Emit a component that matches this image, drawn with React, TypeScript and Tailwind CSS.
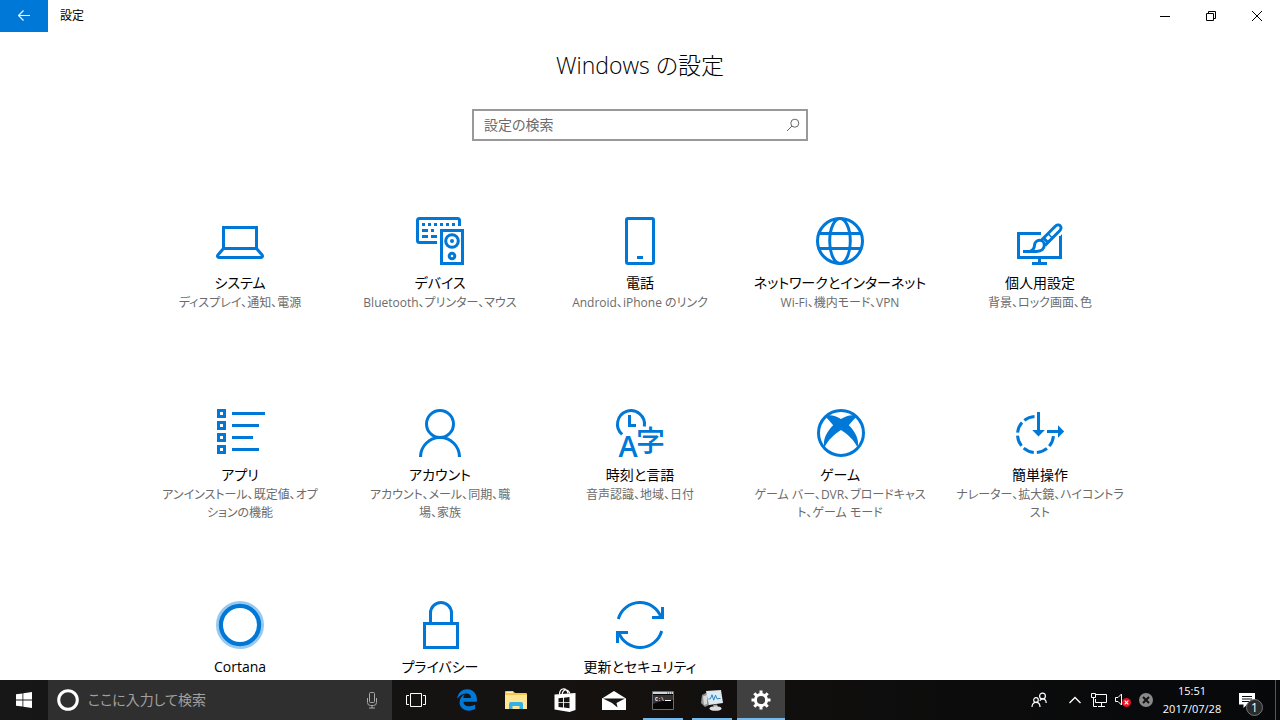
import React from "react";
import { FaEdgeLegacy } from "react-icons/fa";

type Category = {
  title: string;
  lines: string[];
  icon: React.ReactNode;
};

function TileIcon({ children }: { children: React.ReactNode }) {
  return (
    <svg
      viewBox="0 0 48 48"
      className="size-12 overflow-visible text-[#0078d7]"
      fill="none"
      stroke="currentColor"
      strokeWidth="3"
      aria-hidden="true"
    >
      {children}
    </svg>
  );
}

const systemIcon = (
  <TileIcon>
    <path d="M7.5 31.5V10.5h33v21" />
    <path d="M7.5 31.5h33l5.4 6.2c1.3 1.6.3 2.8-1.4 2.8h-41c-1.7 0-2.7-1.2-1.4-2.8z" />
  </TileIcon>
);

const devicesIcon = (
  <TileIcon>
    <path d="M21 25.5H3.5q-2 0-2-2v-20q0-2 2-2h38q2 0 2 2V9" />
    <path d="M6 7.5h3m3 0h3m3 0h3m3 0h3m3 0h3m3 0h3M6 13.5h6m3 0h3M6 19.5h6m3 0h6" />
    <path d="M25.5 13.5h21v33h-21z" />
    <circle cx="36" cy="24" r="6.3" />
    <circle cx="36" cy="24" r="2" fill="currentColor" stroke="none" />
    <circle cx="36" cy="39" r="2.8" />
  </TileIcon>
);

const phoneIcon = (
  <TileIcon>
    <rect x="10.5" y="1.5" width="27" height="45" rx="1.5" />
    <path d="M21 40.5h6" />
  </TileIcon>
);

const networkIcon = (
  <TileIcon>
    <circle cx="24" cy="24" r="22.5" />
    <ellipse cx="24" cy="24" rx="10.3" ry="22.5" />
    <path d="M3 16.5h42M3 31.5h42" />
  </TileIcon>
);

const personalIcon = (
  <TileIcon>
    <path d="M25 16.5H2.5v24h42V19" />
    <path d="M23.5 42v4M16 46.5h15" />
    <path d="M46 17v5l-3-1.5z" fill="currentColor" stroke="none" />
    <path d="M7 34.5h13.5c5 0 7.8-2.6 7.8-6.4 0-2.6-2-4.8-4.6-4.8-3 0-5 2.2-5.2 5-.2 3-1.6 5-4.5 6.2" />
    <path d="M24.6 24 39.3 9.3c1.5-1.5 3.6-1.9 4.9-.6s1 3.5-.5 5L29 28.4" />
    <path d="m27.5 21 4.3 4.3" />
    <path d="m32 16.6 4 4" strokeWidth="1.5" />
  </TileIcon>
);

const appsIcon = (
  <TileIcon>
    <path d="M2.5 1.5h6v6h-6zM2.5 13.5h6v6h-6zM2.5 25.5h6v6h-6zM2.5 37.5h6v6h-6z" />
    <path d="M16 4.5h33M16 16.5h27M16 28.5h21M16 40.5h27" />
  </TileIcon>
);

const accountsIcon = (
  <TileIcon>
    <circle cx="24" cy="15" r="13.5" />
    <path d="M4.5 48a19.5 19.5 0 0 1 39 0" />
  </TileIcon>
);

const timeIcon = (
  <TileIcon>
    <path d="M6.2 25.4A13.5 13.5 0 1 1 28.3 17.5" />
    <path d="M13.5 6v10.5H20" />
    <text x="2.5" y="48" fontSize="29" fontWeight="600" fontFamily="Open Sans, sans-serif" fill="currentColor" stroke="none">
      A
    </text>
    <text x="20" y="43" fontSize="29" fontWeight="500" fontFamily="Noto Sans CJK JP, sans-serif" fill="currentColor" stroke="none">
      字
    </text>
  </TileIcon>
);

const gamingIcon = (
  <TileIcon>
    <circle cx="25" cy="24" r="22.5" />
    <path
      d="M9 7.5C13 5 19 6.2 25 10 31 6.2 37 5 41 7.5 39 9 36 12.5 32.8 16.2 39 22 43.8 31 41.5 38.5 38 31 32 25.5 25 21 18 25.500 12 31 8.500 38.500 6.200 31 11 22 17.200 16.200 14 12.500 11 9 9 7.500z"
      fill="currentColor"
      stroke="none"
    />
  </TileIcon>
);

const easeIcon = (
  <TileIcon>
    <path d="M37.5 25.5a18 18 0 1 1-18-18" strokeDasharray="11 3.14" strokeDashoffset="-1.57" />
    <path d="M22.5 3v19M31 22.5h12" />
    <path d="M16.2 21h12.6l-6.3 6.5zM42 16.2v12.6l6.2-6.3z" fill="currentColor" stroke="none" />
  </TileIcon>
);

const cortanaIcon = (
  <TileIcon>
    <circle cx="24" cy="24" r="22.2" stroke="#99c9ef" strokeWidth="3.6" />
    <circle cx="24" cy="24" r="19.1" strokeWidth="4.2" />
  </TileIcon>
);

const privacyIcon = (
  <TileIcon>
    <path d="M8.5 22.5h33v24h-33z" />
    <path d="M14.5 22.5V12a10.5 10.5 0 0 1 21 0v10.5" />
  </TileIcon>
);

const updateIcon = (
  <TileIcon>
    <path d="M2.3 18A22.5 22.5 0 0 1 45.2 16.5M45.7 30A22.5 22.5 0 0 1 2.8 31.5" />
    <path d="M36 16.5h10.5V6M12 31.5H1.5V42" />
  </TileIcon>
);

const categories: Category[] = [
  { title: "システム", lines: ["ディスプレイ、通知、電源"], icon: systemIcon },
  { title: "デバイス", lines: ["Bluetooth、プリンター、マウス"], icon: devicesIcon },
  { title: "電話", lines: ["Android、iPhone のリンク"], icon: phoneIcon },
  { title: "ネットワークとインターネット", lines: ["Wi-Fi、機内モード、VPN"], icon: networkIcon },
  { title: "個人用設定", lines: ["背景、ロック画面、色"], icon: personalIcon },
  { title: "アプリ", lines: ["アンインストール、既定値、オプ", "ションの機能"], icon: appsIcon },
  { title: "アカウント", lines: ["アカウント、メール、同期、職", "場、家族"], icon: accountsIcon },
  { title: "時刻と言語", lines: ["音声認識、地域、日付"], icon: timeIcon },
  { title: "ゲーム", lines: ["ゲーム バー、DVR、ブロードキャス", "ト、ゲーム モード"], icon: gamingIcon },
  { title: "簡単操作", lines: ["ナレーター、拡大鏡、ハイコントラ", "スト"], icon: easeIcon },
  { title: "Cortana", lines: [], icon: cortanaIcon },
  { title: "プライバシー", lines: [], icon: privacyIcon },
  { title: "更新とセキュリティ", lines: [], icon: updateIcon },
];

function Tile({ title, lines, icon }: Category) {
  return (
    <a href="#" className="flex h-48 flex-col items-center text-center whitespace-nowrap">
      {icon}
      <span className="mt-2 text-sm leading-5 text-black">{title}</span>
      <span className="mt-px text-xs leading-[18px] text-[#6b6b6b]">
        {lines.map((line) => (
          <span key={line} className="block">
            {line}
          </span>
        ))}
      </span>
    </a>
  );
}

function TitleBar() {
  return (
    <header className="flex h-8 shrink-0 items-center">
      <button aria-label="戻る" className="flex h-8 w-12 items-center justify-center bg-[#0078d7] text-white">
        <svg viewBox="0 0 12 12" className="size-3" fill="none" stroke="currentColor" strokeWidth="1.2" aria-hidden="true">
          <path d="M0.5 5.5H12M5.5 0.5l-5 5 5 5" />
        </svg>
      </button>
      <span className="ml-3 flex-1 text-xs text-black">設定</span>
      <button aria-label="最小化" className="flex h-8 w-[46px] items-center justify-center">
        <svg viewBox="0 0 10 10" className="size-2.5" stroke="#000" aria-hidden="true">
          <path d="M0 5.5h10" />
        </svg>
      </button>
      <button aria-label="元に戻す" className="flex h-8 w-[46px] items-center justify-center">
        <svg viewBox="0 0 10 10" className="size-2.5" fill="none" stroke="#000" aria-hidden="true">
          <path d="M0.5 2.5h7v7h-7zM2.5 2.5v-2h7v7h-2" />
        </svg>
      </button>
      <button aria-label="閉じる" className="flex h-8 w-[46px] items-center justify-center">
        <svg viewBox="0 0 10 10" className="size-2.5" stroke="#000" aria-hidden="true">
          <path d="M0 0l10 10M10 0L0 10" />
        </svg>
      </button>
    </header>
  );
}

function TaskButton({
  label,
  running = "none",
  children,
}: {
  label: string;
  running?: "none" | "open" | "active";
  children: React.ReactNode;
}) {
  const look = {
    none: "border-transparent w-12",
    open: "border-[#76b9ed] w-10 mx-1",
    active: "border-[#76b9ed] w-12 bg-[#404040]",
  }[running];
  return (
    <button aria-label={label} className={`flex h-10 items-center justify-center border-b-2 pt-0.5 ${look}`}>
      {children}
    </button>
  );
}

function TaskBar() {
  return (
    <footer className="flex h-10 shrink-0 items-center bg-linear-to-r from-[#171717] via-[#14110f] to-[#06080a] text-white">
      <button aria-label="スタート" className="flex h-10 w-12 items-center justify-center">
        <svg viewBox="0 0 16 16" className="size-4" fill="#fff" aria-hidden="true">
          <path d="M0 2.3 6.5 1.4v6.2H0zM7.3 1.3 16 0v7.6H7.3zM0 8.4h6.5v6.2L0 13.7zM7.3 8.4H16V16l-8.7-1.3z" />
        </svg>
      </button>
      <label className="flex h-10 w-[344px] items-center bg-[#2f2f2f] pr-3 pl-2">
        <svg viewBox="0 0 24 24" className="size-6 shrink-0" fill="none" stroke="#fff" strokeWidth="3" aria-hidden="true">
          <circle cx="12" cy="12" r="9.3" />
        </svg>
        <input
          aria-label="ここに入力して検索"
          placeholder="ここに入力して検索"
          className="ml-2 min-w-0 flex-1 bg-transparent text-sm outline-none placeholder:text-[#a0a0a0] placeholder:opacity-100"
        />
        <svg viewBox="0 0 16 18" className="h-[18px] w-4" fill="none" stroke="#a8a8a8" aria-hidden="true">
          <rect x="5.5" y="1.5" width="5" height="10" rx="1" />
          <path d="M3.5 7v4.5q0 3 3 3h3q3 0 3-3V7M8 14.5v2.5M5 17h6" />
        </svg>
      </label>
      <button aria-label="タスク ビュー" className="flex h-10 w-12 items-center justify-center">
        <svg viewBox="0 0 20 14" className="h-3.5 w-5" fill="none" stroke="#fff" aria-hidden="true">
          <path d="M4.5.5h11v13h-11zM3 2.5H.5v9H3M17 2.5h2.5v9H17" />
        </svg>
      </button>
      <div className="ml-[3px] flex gap-px">
        <TaskButton label="Microsoft Edge">
          <FaEdgeLegacy className="size-[22px] text-[#0078d7]" />
        </TaskButton>
        <TaskButton label="エクスプローラー">
          <svg viewBox="0 0 22 18" className="h-[18px] w-[22px]" aria-hidden="true">
            <path d="M0 1q0-1 1-1h7l2 2h11q1 0 1 1v15H0z" fill="#f5c84c" />
            <path d="M1.5 1.5H8" stroke="#fff3c4" />
            <path d="M0 4h22v14H0z" fill="#ffe594" />
            <path d="M4 18v-5q0-2 2-2h10q2 0 2 2v5h-3.5v-3h-7v3z" fill="#35b0e5" />
          </svg>
        </TaskButton>
        <TaskButton label="ストア">
          <svg viewBox="0 0 22 24" className="h-6 w-[22px]" aria-hidden="true">
            <path
              d="M5.5 6.5C5.5 2.5 7.5.8 9.5.8c2.2 0 3.8 1.5 4.5 4.5M8 6.5c.5-3.5 2.5-5 4.5-4.5 1.8.3 2.8 1.5 3.3 3.5"
              fill="none"
              stroke="#fff"
              strokeWidth="1.2"
            />
            <path d="M.5 6.5 21.5 5v17L15.5 24 .5 21.5z" fill="#fff" />
            <path
              d="m4.5 10.3 4.5-.5v4.4H4.5zM9.9 9.7l5.6-.7v5.2H9.9zM4.5 15.1H9v4.4l-4.5-.5zM9.9 15.1h5.6v5.2l-5.6-.7z"
              fill="#171513"
            />
          </svg>
        </TaskButton>
        <TaskButton label="メール">
          <svg viewBox="0 0 24 19" className="h-[19px] w-6" aria-hidden="true">
            <path d="M0 7.5 12 0l12 7.5V19H0z" fill="#fff" />
            <path d="M1 7.5h22l-8.500 4.500 1 4.500L10 12z" fill="#171513" />
          </svg>
        </TaskButton>
        <TaskButton label="コマンド プロンプト" running="open">
          <svg viewBox="0 0 22 19" className="h-[19px] w-[22px]" aria-hidden="true">
            <path d="M.5.5h21v18H.5z" fill="#050505" stroke="#6c6c6c" />
            <path d="M1 1h20v2H1z" fill="#cfd5da" />
            <path d="M15 2h1m1 0h1m1 0h1" stroke="#445" />
            <path d="M1 4h20v5Q10 9 1 13z" fill="#333" />
            <text x="3" y="10" fontSize="5" fontWeight="700" fontFamily="Liberation Mono, monospace" fill="#fff">
              C:\
            </text>
            <path d="M13 9.5h6" stroke="#fff" />
          </svg>
        </TaskButton>
        <TaskButton label="タスク マネージャー" running="open">
          <svg viewBox="0 0 22 21" className="h-[21px] w-[22px]" aria-hidden="true">
            <path d="M1 5 7 2l3 12-6 3-4-4z" fill="#8f9496" />
            <path d="M2 6.5 6 5v9l-3 1z" fill="#d7dadb" />
            <path d="m5 1 15-1 2 13-14 2z" fill="#e3e6e7" />
            <path d="m6.5 2.5 12.3-.8 1.4 9.8-11.4 1.6z" fill="#dcecf6" />
            <path d="m7.5 9 2-.3 1.5-4 1.7 5.5 1.8-5 1.5 3.6 3.5-.4" fill="none" stroke="#2f83bf" />
            <path d="m12 15 4-.5 1 2.5h-4z" fill="#a5a9ab" />
            <ellipse cx="14.5" cy="18.5" rx="6" ry="2.3" fill="#d9dcdd" />
          </svg>
        </TaskButton>
        <TaskButton label="設定" running="active">
          <svg viewBox="0 0 20 20" className="size-5" fill="none" stroke="#fff" aria-hidden="true">
            <circle cx="10" cy="10" r="5.6" strokeWidth="3" />
            <path
              d="M10 .5v4M10 15.5v4M.5 10h4M15.5 10h4M3.3 3.3l2.4 2.4M14.3 14.3l2.4 2.4M3.3 16.7l2.4-2.4M14.3 5.7l2.4-2.4"
              strokeWidth="3"
            />
          </svg>
        </TaskButton>
      </div>
      <div className="ml-auto flex h-10 items-center">
        <button aria-label="People" className="mr-[22px]">
          <svg viewBox="0 0 16 16" className="size-4" fill="none" stroke="#fff" strokeWidth="1.2" aria-hidden="true">
            <circle cx="11.5" cy="4" r="2.9" />
            <circle cx="5" cy="8" r="2.3" />
            <path d="M1 15c0-3 1.6-4.7 4-4.7S9 12 9 15M8.8 8.8c.7-1.2 1.6-1.9 2.7-1.9 2.1 0 3.7 1.4 3.7 4.1" />
          </svg>
        </button>
        <button aria-label="隠れているインジケーター" className="mr-2.5">
          <svg viewBox="0 0 12 8" className="h-2 w-3" fill="none" stroke="#fff" strokeWidth="1.3" aria-hidden="true">
            <path d="m.5 7 5.5-5.5L11.5 7" />
          </svg>
        </button>
        <button aria-label="ネットワーク" className="mr-2">
          <svg viewBox="0 0 16 14" className="h-3.5 w-4" fill="none" stroke="#fff" aria-hidden="true">
            <path d="M5 1.5h10.5v8H4.5V6M7 13.5h7M10.5 10v3M.5.5h4v4h-4zM2.5 5v8.5H6" />
          </svg>
        </button>
        <button aria-label="音量" className="mr-2">
          <svg viewBox="0 0 16 16" className="size-4" fill="none" aria-hidden="true">
            <path d="M.5 5.5H3L6.5 2v11L3 9.5H.5z" stroke="#fff" />
            <circle cx="11.5" cy="10.5" r="4.5" fill="#e81123" />
            <path d="m9.7 8.7 3.6 3.6M13.3 8.7l-3.6 3.6" stroke="#fff" strokeWidth="1.2" />
          </svg>
        </button>
        <button aria-label="入力メソッド" className="mr-[9px]">
          <svg viewBox="0 0 14 14" className="size-3.5" aria-hidden="true">
            <circle cx="7" cy="7" r="7" fill="#8a8a8a" />
            <path d="m4 4 6 6M10 4l-6 6" stroke="#111" strokeWidth="2" />
          </svg>
        </button>
        <button className="mr-[17px] flex w-[60px] flex-col items-center text-[11px] leading-[18px]">
          <span>15:51</span>
          <span>2017/07/28</span>
        </button>
        <button aria-label="通知" className="relative mr-5">
          <svg viewBox="0 0 16 16" className="size-4" aria-hidden="true">
            <path d="M0 1h16v11.5H8L4.5 16v-3.5H0z" fill="#fff" />
            <path d="M3 4.5h10M3 7h10M3 9.5h7" stroke="#0a0c0e" />
          </svg>
          <span className="absolute top-[7px] left-[7px] flex size-[17px] items-center justify-center rounded-full border border-[#777] bg-[#2b2b2b] text-xs leading-none">
            1
          </span>
        </button>
        <span className="h-10 w-[5px] border-l border-[#55585a]" />
      </div>
    </footer>
  );
}

export default function App() {
  return (
    <div
      lang="ja"
      className="flex h-screen flex-col bg-white font-['Open_Sans','Noto_Sans_CJK_JP',sans-serif] [font-feature-settings:'palt']"
    >
      <TitleBar />
      <main className="flex min-h-0 flex-1 flex-col items-center overflow-hidden">
        <h1 className="mt-[15px] text-[23px] leading-9 font-light text-black">Windows の設定</h1>
        <label className="mt-[26px] flex h-8 w-[336px] shrink-0 items-center border-2 border-[#999] pr-1.5 pl-2.5">
          <input
            aria-label="設定の検索"
            placeholder="設定の検索"
            className="min-w-0 flex-1 text-sm outline-none placeholder:text-[#6b6b6b] placeholder:opacity-100"
          />
          <svg viewBox="0 0 14 14" className="size-3.5" fill="none" stroke="#666" aria-hidden="true">
            <circle cx="8.8" cy="5.2" r="4" />
            <path d="m6 8-5 5" />
          </svg>
        </label>
        <div className="mt-[76px] grid w-full max-w-[1000px] grid-cols-5">
          {categories.map((category) => (
            <Tile key={category.title} {...category} />
          ))}
        </div>
      </main>
      <TaskBar />
    </div>
  );
}
